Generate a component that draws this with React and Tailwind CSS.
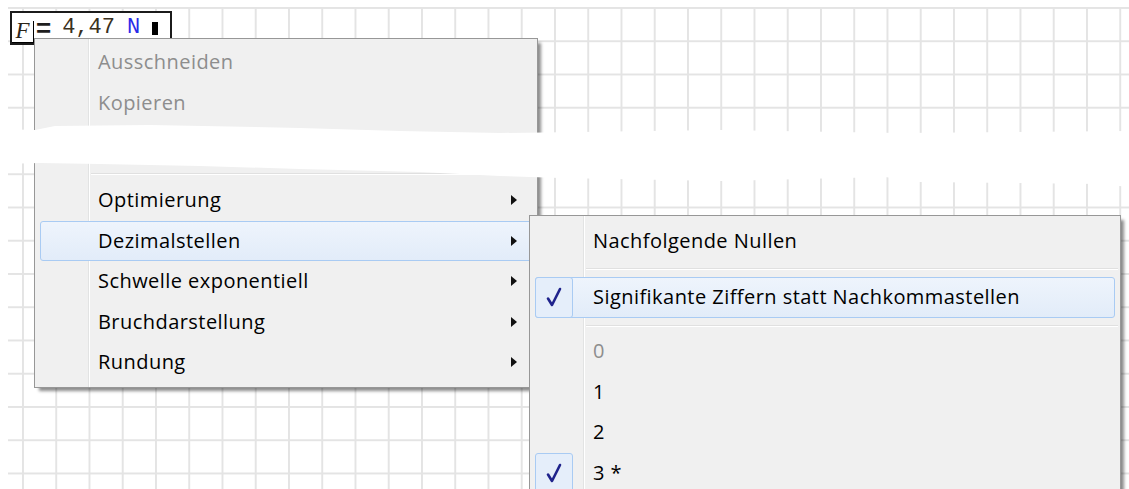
import React from 'react';

const font = "font-['Open_Sans',sans-serif]";

function Arrow() {
  return (
    <svg width="6" height="10" viewBox="0 0 6 10" className="shrink-0">
      <polygon points="0,0 6,5 0,10" fill="#111" />
    </svg>
  );
}

function Check() {
  return (
    <svg width="16" height="20" viewBox="0 0 16 20">
      <path d="M2 11.5 L6 18 L14 2" fill="none" stroke="#1f238c" strokeWidth="2.6" strokeLinejoin="round" strokeLinecap="round" />
    </svg>
  );
}

function Separator({ top, bottom }) {
  return (
    <div style={{ paddingTop: top, paddingBottom: bottom }} className="ml-[56px] mr-[2px]">
      <div className="h-px bg-[#e0e0e0]" />
      <div className="h-px bg-white" />
    </div>
  );
}

// one menu row; `hot` draws the blue hover frame, `checked` the tick box in the gutter
function Item({ label, disabled, submenu, hot, checked }) {
  return (
    <div
      className={
        'mx-[5px] h-[40.5px] flex items-center rounded-[3px] border ' +
        (hot
          ? 'border-[#a9cbf3] bg-[linear-gradient(#eef4fc,#e2ecf9)]'
          : 'border-transparent')
      }
    >
      {checked ? (
        <div className="-my-px -ml-px self-stretch w-[38px] rounded-[3px] border border-[#a9cbf3] bg-[#e5eefa] flex items-center justify-center">
          <Check />
        </div>
      ) : (
        <div className="w-[37px] shrink-0" />
      )}
      <span
        className={
          'ml-[20px] flex-1 text-[20px] tracking-[0.45px] ' +
          (disabled ? 'text-[#8d8d8d]' : 'text-black')
        }
      >
        {label}
      </span>
      {submenu && (
        <span className="mr-[14px]">
          <Arrow />
        </span>
      )}
    </div>
  );
}

export default function App() {
  return (
    <div className={'relative h-[489px] w-full overflow-hidden bg-white pl-[8px] pt-[7px] ' + font}>
      {/* worksheet grid */}
      <div className="h-full w-full bg-[linear-gradient(to_right,#e4e4e4_2px,transparent_2px),linear-gradient(to_bottom,#e4e4e4_2px,transparent_2px)] bg-[size:33.25px_33.25px] bg-[position:14px_0px]" />

      {/* region being edited */}
      <div className="absolute left-[10px] top-[11px] h-[34px] w-[162px] border-2 border-[#1b1b1b] bg-white flex items-center">
        <span className="mt-[8px] self-stretch w-[22px] border-r border-b border-black flex items-start justify-center">
          <span className="-mt-[4px] font-['Liberation_Serif',serif] italic text-[23px] leading-[28px] text-[#2b2418]">F</span>
        </span>
        <span className="ml-[2px] font-['Liberation_Sans',sans-serif] font-bold text-[26px] leading-none text-[#1e1e1e]">=</span>
        <span className="ml-[11px] font-['Liberation_Mono',monospace] text-[22px] leading-none text-[#3a3020]">4,47</span>
        <span className="ml-[12px] font-['Liberation_Mono',monospace] text-[22px] leading-none text-[#2a2ae8]">N</span>
        <span className="ml-[12px] h-[13px] w-[6px] bg-black" />
      </div>

      {/* context menu */}
      <div className="absolute left-[34px] top-[38px] w-[504px] border border-[#979797] bg-[#f0f0f0] bg-[linear-gradient(to_right,transparent_53px,#e2e3e3_53px,#e2e3e3_54px,#ffffff_54px,#ffffff_55px,transparent_55px)] pt-[3px] pb-[4px] shadow-[4px_4px_3px_-1px_rgba(0,0,0,0.45)]">
        <Item label="Ausschneiden" disabled />
        <Item label="Kopieren" disabled />
        <div className="h-[46px]" />
        <Separator top={4} bottom={5} />
        <Item label="Optimierung" submenu />
        <Item label="Dezimalstellen" submenu hot />
        <Item label="Schwelle exponentiell" submenu />
        <Item label="Bruchdarstellung" submenu />
        <Item label="Rundung" submenu />
      </div>

      {/* Dezimalstellen submenu */}
      <div className="absolute left-[529px] top-[215px] h-[300px] w-[592px] border border-[#979797] bg-[#f0f0f0] bg-[linear-gradient(to_right,transparent_53px,#e2e3e3_53px,#e2e3e3_54px,#ffffff_54px,#ffffff_55px,transparent_55px)] pt-[5px] shadow-[4px_4px_3px_-1px_rgba(0,0,0,0.45)]">
        <Item label="Nachfolgende Nullen" />
        <Separator top={6} bottom={7.5} />
        <Item label="Signifikante Ziffern statt Nachkommastellen" hot checked />
        <Separator top={7} bottom={4.5} />
        <Item label="0" disabled />
        <Item label="1" />
        <Item label="2" />
        <Item label="3 *" checked />
      </div>

      {/* torn strip across the page */}
      <svg className="absolute inset-0 pointer-events-none" width="1129" height="489" viewBox="0 0 1129 489">
        <polygon
          fill="#ffffff"
          points="0,129 35,130 55,126 150,125 300,128 400,131 500,133 720,130 900,133 1129,131 1129,187 1100,184 920,182 885,177 720,181 560,178 500,176 420,172 300,169 200,166 100,164 40,163 0,164"
        />
      </svg>
    </div>
  );
}
